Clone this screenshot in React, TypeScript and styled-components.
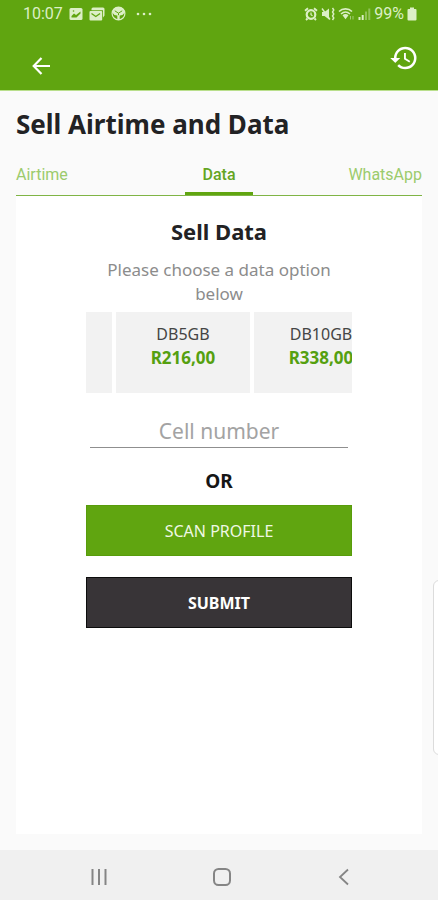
import React, { useLayoutEffect, useRef, useState } from "react";
import styled, { createGlobalStyle } from "styled-components";

const green = "#60a510";

const GlobalStyle = createGlobalStyle`
  * { box-sizing: border-box; }
  body { margin: 0; background: #fafafa; font-family: "Noto Sans", "Open Sans", sans-serif; }
  button, input { font-family: inherit; }
`;

const Screen = styled.div`
  position: relative;
  display: flex;
  flex-direction: column;
  min-height: 100vh;
  overflow: hidden;
  background: #fafafa;
`;

const Header = styled.header`
  background: ${green};
  border-bottom: 1px solid #b9df8c;
  color: #fff;
`;

const StatusBar = styled.div`
  display: flex;
  align-items: center;
  justify-content: space-between;
  height: 27px;
  padding: 0 21px 0 23px;
  font: 400 16px/27px Roboto, sans-serif;
  color: #dcefc6;
`;

const StatusGroup = styled.div<{ $gap: number }>`
  display: flex;
  align-items: center;
  gap: ${(p) => p.$gap}px;
  svg { display: block; }
`;

const Toolbar = styled.div`
  display: flex;
  justify-content: space-between;
  height: 63px;
  padding: 15px 19px 0 29px;
`;

const IconButton = styled.button<{ $low?: boolean }>`
  display: flex;
  height: 32px;
  margin-top: ${(p) => (p.$low ? 8 : 0)}px;
  padding: 0;
  border: 0;
  background: none;
  color: inherit;
  align-items: center;
`;

const Main = styled.main`
  flex: 1;
  display: flex;
  flex-direction: column;
  padding: 0 16px 16px;
`;

const Title = styled.h1`
  margin: 15px 0 0;
  font: 700 26px/36px "Noto Sans", "Open Sans", sans-serif;
  color: #222224;
`;

const Tabs = styled.div`
  display: grid;
  grid-template-columns: 1fr 68px 1fr;
  margin-top: 15px;
  border-bottom: 1px solid #7fb445;
`;

const Tab = styled.button<{ $align: string }>`
  height: 38px;
  padding: 0;
  border: 0;
  border-bottom: 3px solid transparent;
  background: none;
  font: 400 16px/35px Roboto, sans-serif;
  text-align: ${(p) => p.$align};
  color: #9ccb6c;
  &[aria-selected="true"] {
    border-bottom-color: ${green};
    color: #64a522;
    font-weight: 500;
  }
`;

const Card = styled.form`
  flex: 1;
  display: flex;
  flex-direction: column;
  padding: 19px 70px 0;
  background: #fff;
`;

const CardTitle = styled.h2`
  margin: 0;
  font-size: 22px;
  line-height: 32px;
  font-weight: 700;
  text-align: center;
  color: #222224;
`;

const Hint = styled.p`
  margin: 11px 0 6px;
  font-size: 17px;
  line-height: 24px;
  text-align: center;
  color: #8c8c8c;
`;

const Options = styled.div`
  display: flex;
  gap: 4px;
  overflow-x: auto;
  scrollbar-width: none;
`;

const Option = styled.button`
  flex: 0 0 134px;
  display: flex;
  flex-direction: column;
  align-items: center;
  height: 81px;
  padding: 10px 0 0;
  border: 0;
  background: #f2f2f2;
  font-size: 16px;
  line-height: 24px;
  color: #454545;
`;

const Price = styled.strong`
  font-size: 17px;
  font-weight: 700;
  color: #55a010;
`;

const CellInput = styled.input`
  height: 38px;
  margin: 17px 4px 0;
  padding: 4px 0 0;
  min-width: 0;
  border: 0;
  border-bottom: 1px solid #8f8f8f;
  border-radius: 0;
  outline: 0;
  background: none;
  font-size: 21px;
  text-align: center;
  color: #333;
  &::placeholder { color: #a3a3a3; opacity: 1; }
`;

const Or = styled.p`
  margin: 21px 0 12px;
  font-size: 19px;
  line-height: 24px;
  font-weight: 700;
  text-align: center;
  color: #161616;
`;

const Action = styled.button<{ $dark?: boolean }>`
  height: 51px;
  margin-bottom: 21px;
  padding: 0;
  border: 1px solid ${(p) => (p.$dark ? "#0c0c0c" : "#589c0b")};
  background: ${(p) => (p.$dark ? "#383437" : green)};
  font-size: 16px;
  font-weight: ${(p) => (p.$dark ? 700 : 400)};
  color: ${(p) => (p.$dark ? "#fff" : "#eff8e4")};
`;

const EdgeHandle = styled.div`
  position: absolute;
  right: -8px;
  top: 580px;
  width: 13px;
  height: 175px;
  border: 1px solid #dcdcdc;
  border-radius: 6px;
  background: #fff;
`;

const NavBar = styled.nav`
  display: flex;
  justify-content: space-between;
  align-items: center;
  height: 50px;
  padding: 4px 79px 0 84px;
  background: #f0f0f0;
  color: #858585;
`;

const TABS = [
  { name: "Airtime", align: "left" },
  { name: "Data", align: "center" },
  { name: "WhatsApp", align: "right" },
];

const OPTIONS = [
  { name: "", price: "" },
  { name: "DB5GB", price: "R216,00" },
  { name: "DB10GB", price: "R338,00" },
];

const PictureIcon = () => (
  <svg width="14" height="14" viewBox="0 0 14 14">
    <rect x="0.5" y="1" width="13" height="12" rx="1.5" fill="currentColor" />
    <path d="M2.500 10.500V9l2.500-2.500 2 1.500 4.500-3.500v2L7.500 10.500z" fill={green} />
    <circle cx="4.500" cy="4" r="0.800" fill={green} />
  </svg>
);

const MailIcon = () => (
  <svg width="16" height="14" viewBox="0 0 16 14">
    <path d="M4 .5h10A1.500 1.500 0 0 1 15.500 2v6.500L14 10.500V3.200H2.500V2A1.500 1.500 0 0 1 4 .5z" fill="currentColor" />
    <rect x="0.500" y="4" width="12.700" height="9.500" rx="1" fill="currentColor" />
    <path d="M2.500 6.500l4.300 3 4.300-3" fill="none" stroke={green} strokeWidth="1.300" />
  </svg>
);

const GlobeIcon = () => (
  <svg width="15" height="15" viewBox="0 0 15 15">
    <circle cx="7.500" cy="7.500" r="6.400" fill="none" stroke="currentColor" strokeWidth="1.200" />
    <path d="M1.200 6.500C1.800 3 4.300 1 7.500 1s5.700 2 6.300 5.500L11.500 9 8.700 9.500V14H6.300V9.500L3.500 9z" fill="currentColor" />
    <path d="M3.800 4.800l3.700 2.400 3.700-2.400M7.500 7.200v2" stroke={green} strokeWidth="1" fill="none" />
  </svg>
);

const DotsIcon = () => (
  <svg width="24" height="4" viewBox="0 0 24 4" fill="currentColor">
    <circle cx="6" cy="2" r="1.300" /><circle cx="12" cy="2" r="1.300" /><circle cx="18" cy="2" r="1.300" />
  </svg>
);

const AlarmIcon = () => (
  <svg width="14" height="14" viewBox="0 0 14 14" fill="none" stroke="currentColor">
    <circle cx="7" cy="7.500" r="4.300" strokeWidth="2.200" />
    <path d="M1 3.800L4 1.300M13 3.800L10 1.300M3.500 11.500L2 13M10.500 11.500L12 13" strokeWidth="1.900" />
    <path d="M7 5.500v2.300l1.500 1" strokeWidth="1.200" />
  </svg>
);

const MuteIcon = () => (
  <svg width="14" height="14" viewBox="0 0 14 14" fill="none" stroke="currentColor">
    <path d="M1 5h2.500L8 1.500v11L3.500 9H1z" fill="currentColor" stroke="none" />
    <path d="M1 1.500l8 11" strokeWidth="1.400" />
    <path d="M11.500 1l1.300 2-1.300 2 1.300 2-1.300 2 1.300 2-1.300 2" strokeWidth="1.400" />
  </svg>
);

const WifiIcon = () => (
  <svg width="17" height="14" viewBox="0 0 17 14" fill="none" stroke="currentColor">
    <path d="M1 4.500C4.500 1 10.500 1 14 4.500M3 7c2.800-2.500 6.200-2.500 9 0" strokeWidth="1.600" />
    <path d="M4.500 8.300c2-1.600 4-1.600 6 0l-3 4z" fill="currentColor" stroke="none" />
    <path d="M12.500 12.500V9M15 9v3.500" strokeWidth="1" opacity=".55" />
  </svg>
);

const SignalIcon = () => (
  <svg width="13" height="14" viewBox="0 0 13 14" fill="currentColor">
    <path d="M0.500 10h2v3h-2zM3.700 8h2v5h-2z" />
    <path d="M7 4.500h2V13H7zM10.300 1.500h2V13h-2z" opacity=".4" />
  </svg>
);

const BatteryIcon = () => (
  <svg width="10" height="14" viewBox="0 0 10 14" fill="currentColor">
    <path d="M3 .5h4V2h1.500a1 1 0 0 1 1 1v9.500a1 1 0 0 1-1 1h-7a1 1 0 0 1-1-1V3a1 1 0 0 1 1-1H3z" />
  </svg>
);

const BackArrow = () => (
  <svg width="24" height="24" viewBox="0 0 24 24" fill="none" stroke="currentColor" strokeWidth="2.200">
    <path d="M21 12H5M12.500 4L4.700 12l7.800 8" />
  </svg>
);

const HistoryIcon = () => (
  <svg width="30" height="30" viewBox="0 0 24 24" fill="currentColor">
    <path d="M13 3a9 9 0 0 0-9 9H1l3.890 3.890.07.14L9 12H6c0-3.870 3.130-7 7-7s7 3.130 7 7-3.130 7-7 7c-1.930 0-3.680-.79-4.940-2.060l-1.420 1.420A8.950 8.950 0 0 0 13 21a9 9 0 0 0 0-18zm-1 5v5l4.280 2.540.72-1.210-3.500-2.080V8H12z" />
  </svg>
);

const RecentsIcon = () => (
  <svg width="30" height="18" viewBox="0 0 30 18" stroke="currentColor" strokeWidth="2">
    <path d="M8.500 1v16M15 1v16M21.500 1v16" />
  </svg>
);

const HomeIcon = () => (
  <svg width="30" height="20" viewBox="0 0 30 20" fill="none" stroke="currentColor" strokeWidth="2">
    <rect x="7" y="2" width="16" height="16" rx="4.500" />
  </svg>
);

const NavBackIcon = () => (
  <svg width="30" height="18" viewBox="0 0 30 18" fill="none" stroke="currentColor" strokeWidth="1.800">
    <path d="M19 1.500L11 9l8 7.500" />
  </svg>
);

export default function App() {
  const [tab, setTab] = useState("Data");
  const [cell, setCell] = useState("");
  const strip = useRef<HTMLDivElement>(null);

  useLayoutEffect(() => {
    if (strip.current) strip.current.scrollLeft = 108;
  }, []);

  return (
    <Screen>
      <GlobalStyle />
      <Header>
        <StatusBar>
          <StatusGroup $gap={6}>
            <span>10:07</span>
            <PictureIcon />
            <MailIcon />
            <GlobeIcon />
            <DotsIcon />
          </StatusGroup>
          <StatusGroup $gap={3}>
            <AlarmIcon />
            <MuteIcon />
            <WifiIcon />
            <SignalIcon />
            <span>99%</span>
            <BatteryIcon />
          </StatusGroup>
        </StatusBar>
        <Toolbar>
          <IconButton $low aria-label="Back"><BackArrow /></IconButton>
          <IconButton aria-label="History"><HistoryIcon /></IconButton>
        </Toolbar>
      </Header>
      <Main>
        <Title>Sell Airtime and Data</Title>
        <Tabs role="tablist">
          {TABS.map((t) => (
            <Tab key={t.name} role="tab" $align={t.align} aria-selected={tab === t.name} onClick={() => setTab(t.name)}>
              {t.name}
            </Tab>
          ))}
        </Tabs>
        <Card onSubmit={(e) => e.preventDefault()}>
          <CardTitle>Sell Data</CardTitle>
          <Hint>Please choose a data option below</Hint>
          <Options ref={strip}>
            {OPTIONS.map((o, i) => (
              <Option key={i} type="button">
                <span>{o.name}</span>
                <Price>{o.price}</Price>
              </Option>
            ))}
          </Options>
          <CellInput
            type="tel"
            aria-label="Cell number"
            placeholder="Cell number"
            value={cell}
            onChange={(e) => setCell(e.target.value)}
          />
          <Or>OR</Or>
          <Action type="button">SCAN PROFILE</Action>
          <Action type="submit" $dark>SUBMIT</Action>
        </Card>
      </Main>
      <NavBar>
        <IconButton aria-label="Recent apps"><RecentsIcon /></IconButton>
        <IconButton aria-label="Home"><HomeIcon /></IconButton>
        <IconButton aria-label="Back"><NavBackIcon /></IconButton>
      </NavBar>
      <EdgeHandle />
    </Screen>
  );
}
